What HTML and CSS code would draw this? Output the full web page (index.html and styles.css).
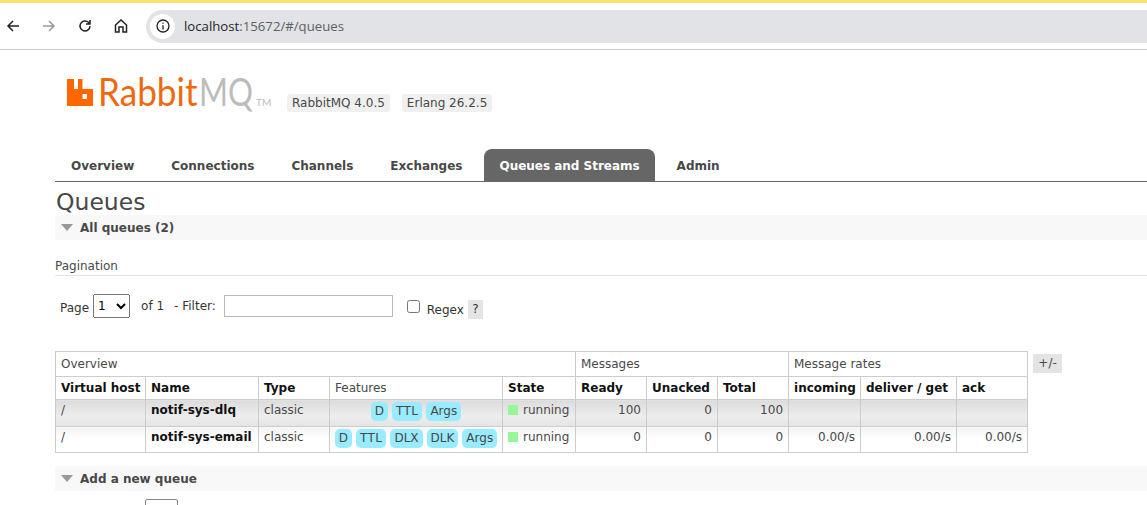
FILE: index.html
```html
<!DOCTYPE html>
<html lang="en">
  <head>
    <meta charset="UTF-8" />
    <title>RabbitMQ Management</title>
    <link rel="stylesheet" href="styles.css">
  </head>
  <body>
    <!-- browser chrome -->
    <div class="toolbar">
      <svg class="tool-icon" viewBox="0 0 16 16"><path d="M14 8H3M8 3L3 8l5 5" /></svg>
      <svg class="tool-icon tool-off" viewBox="0 0 16 16"><path d="M2 8h11M8 3l5 5-5 5" /></svg>
      <svg class="tool-icon" viewBox="0 0 16 16"><path d="M13 8a5 5 0 1 1-1.600-3.700L13 5.800M13 2v4H9" /></svg>
      <svg class="tool-icon" viewBox="0 0 16 16"><path d="M2.500 7L8 2l5.500 5v7H10V9H6v5H2.500z" /></svg>
      <div class="address">
        <span class="site-info">
          <svg viewBox="0 0 16 16"><circle cx="8" cy="8" r="6" /><path d="M8 7.300V11.500M8 4.500v1.300" /></svg>
        </span>
        <span class="url"><b>localhost</b>:15672/#/queues</span>
      </div>
    </div>

    <div class="page">
      <div class="header">
        <div class="logo">
          <svg class="logo-mark" viewBox="0 0 26 27"><path fill-rule="evenodd" d="M0 0h7v10h4V0h4.500v10H26v17H0zM15.500 15v5H20v-5z" /></svg>
          <span class="logo-rabbit">Rabbit</span><span class="logo-mq">MQ</span><span class="logo-tm">TM</span>
        </div>
        <span class="version">RabbitMQ 4.0.5</span>
        <span class="version">Erlang 26.2.5</span>
      </div>

      <ul class="tabs">
        <li>Overview</li>
        <li>Connections</li>
        <li>Channels</li>
        <li>Exchanges</li>
        <li class="active">Queues and Streams</li>
        <li>Admin</li>
      </ul>

      <h1>Queues</h1>
      <div class="section-bar"><span class="arrow"></span>All queues (2)</div>

      <h3 class="sub">Pagination</h3>
      <div class="filter-row">
        <span class="page-label">Page</span>
        <select class="page-select"><option>1</option></select>
        <span class="of">of 1</span>
        <span class="dash">- Filter:</span>
        <input class="filter" type="text" />
        <input class="regex" type="checkbox" />
        <span class="regex-label">Regex</span>
        <span class="help">?</span>
      </div>

      <div class="table-wrap">
        <table class="list">
          <colgroup>
            <col class="c-vhost" /><col class="c-name" /><col class="c-type" /><col class="c-feat" /><col class="c-state" />
            <col class="c-num" /><col class="c-num" /><col class="c-num" />
            <col class="c-inc" /><col class="c-del" /><col class="c-ack" />
          </colgroup>
          <tr class="group">
            <th colspan="5">Overview</th>
            <th colspan="3">Messages</th>
            <th colspan="3">Message rates</th>
          </tr>
          <tr class="head">
            <th>Virtual host</th><th>Name</th><th>Type</th><th class="plain">Features</th><th>State</th>
            <th>Ready</th><th>Unacked</th><th>Total</th>
            <th>incoming</th><th>deliver / get</th><th>ack</th>
          </tr>
          <tr class="alt1">
            <td>/</td><td class="qname">notif-sys-dlq</td><td>classic</td>
            <td class="tags"><span class="tag">D</span><span class="tag tag-ttl">TTL</span><span class="tag">Args</span></td>
            <td><span class="dot"></span>running</td>
            <td class="r">100</td><td class="r">0</td><td class="r">100</td>
            <td></td><td></td><td></td>
          </tr>
          <tr class="alt2">
            <td>/</td><td class="qname">notif-sys-email</td><td>classic</td>
            <td class="tags"><span class="tag">D</span><span class="tag tag-ttl">TTL</span><span class="tag">DLX</span><span class="tag">DLK</span><span class="tag">Args</span></td>
            <td><span class="dot"></span>running</td>
            <td class="r">0</td><td class="r">0</td><td class="r">0</td>
            <td class="r">0.00/s</td><td class="r">0.00/s</td><td class="r">0.00/s</td>
          </tr>
        </table>
        <span class="plus-minus">+/-</span>
      </div>

      <div class="section-bar section-add"><span class="arrow"></span>Add a new queue</div>
      <div class="add-form"><div class="stub"></div></div>
    </div>
  </body>
</html>
```
FILE: styles.css
```css
html, body {
  margin: 0;
  height: 505px;
  overflow: hidden;
  background: #fff;
}

body {
  font-family: "DejaVu Sans", Verdana, sans-serif;
  font-size: 12px;
  color: #484848;
}

/* browser toolbar */
.toolbar {
  display: flex;
  align-items: center;
  height: 46px;
  border-top: 3px solid #fde26c;
  border-bottom: 1px solid #ccc;
  padding-left: 5px;
}

.tool-icon {
  flex: none;
  width: 16px;
  height: 16px;
  margin-right: 20px;
  fill: none;
  stroke: #222;
  stroke-width: 1.5;
}

.tool-off {
  stroke: #999;
}

.address {
  display: flex;
  align-items: center;
  flex: 1;
  height: 33px;
  margin-left: -3px;
  border-radius: 17px 0 0 17px;
  background: #e1e3e6;
}

.site-info {
  display: flex;
  align-items: center;
  justify-content: center;
  width: 25px;
  height: 25px;
  margin-left: 4px;
  border-radius: 50%;
  background: #fff;
}

.site-info svg {
  width: 16px;
  height: 16px;
  fill: none;
  stroke: #222;
  stroke-width: 1.3;
}

.url {
  margin-left: 9px;
  font-family: "Open Sans", sans-serif;
  font-size: 13.200px;
  color: #5c5f63;
}

.url b {
  font-weight: 400;
  color: #1f1f1f;
}

/* page */
.page {
  padding-left: 55px;
}

.header {
  display: flex;
  align-items: flex-start;
  height: 99px;
}

.logo {
  display: flex;
  align-items: baseline;
  flex: none;
  width: 232px;
  height: 40px;
  margin-top: 21px;
  padding-left: 12px;
  box-sizing: border-box;
  font-family: "Lato", sans-serif;
  font-size: 39px;
  line-height: 40px;
}

.logo-mark {
  flex: none;
  align-self: flex-start;
  width: 26px;
  height: 27px;
  margin: 8px 5px 0 0;
  fill: #ff6600;
}

/* the real wordmark is narrower than any installed face */
.logo-rabbit, .logo-mq {
  transform-origin: left;
}

.logo-rabbit {
  width: 98px;
  color: #f0690f;
  transform: scaleX(0.9);
}

.logo-mq {
  width: 52px;
  margin-left: 3px;
  color: #bcbcbc;
  transform: scaleX(0.8);
}

.logo-tm {
  margin-left: 5px;
  font-size: 10px;
  color: #bcbcbc;
}

.version {
  margin: 44px 12px 0 0;
  padding: 1px 5px;
  border-radius: 3px;
  background: #f0f0f0;
  line-height: 16px;
  font-size: 12px;
}

.tabs {
  display: flex;
  margin: 0;
  padding: 0;
  height: 32px;
  border-bottom: 1px solid #666;
  list-style: none;
}

.tabs li {
  padding: 0 16px;
  margin-right: 5px;
  line-height: 35px;
  font-weight: bold;
  font-size: 12px;
  border-radius: 8px 8px 0 0;
}

.tabs li.active {
  margin: 0 5.500px 0 0.500px;
  padding: 0 15.500px;
  letter-spacing: -0.020px;
  background: #666;
  color: #fff;
}

h1 {
  margin: 8px 0 0 1px;
  font-size: 23.500px;
  line-height: 25px;
  font-weight: normal;
  color: #484848;
}

.section-bar {
  display: flex;
  align-items: center;
  height: 25px;
  background: #f8f8f8;
  font-size: 12px;
  font-weight: bold;
}

.arrow {
  width: 0;
  height: 0;
  margin: 0 7px 0 6px;
  border-left: 6px solid transparent;
  border-right: 6px solid transparent;
  border-top: 7px solid #999;
}

.sub {
  margin: 19px 0 0;
  padding-bottom: 1px;
  border-bottom: 1px solid #e4e4e4;
  font-size: 12px;
  line-height: 15px;
  font-weight: normal;
}

.filter-row {
  display: flex;
  align-items: center;
  height: 24px;
  margin-top: 18px;
  padding-left: 5px;
  color: #333;
}

.page-label {
  margin-top: 4px;
}

.page-select {
  width: 37px;
  height: 24px;
  margin: 0 0 0 4px;
  font-family: inherit;
  font-size: 12px;
}

.of {
  margin: 0 0 1px 11px;
}

.dash {
  margin: 0 0 1px 10px;
}

.filter {
  width: 169px;
  height: 22px;
  margin: 0 0 0 8px;
  padding: 0;
  box-sizing: border-box;
  border: 1px solid #bbb;
}

.regex {
  width: 13px;
  height: 13px;
  margin: 0 0 0 14px;
}

.regex-label {
  margin: 8px 0 0 7px;
}

.help {
  width: 15px;
  margin: 7px 0 0 4px;
  padding: 2px 0;
  background: #e4e4e4;
  line-height: 15px;
  text-align: center;
}

.table-wrap {
  display: flex;
  align-items: flex-start;
  margin-top: 33px;
}

.list {
  width: 973px;
  table-layout: fixed;
  border-collapse: collapse;
  font-size: 12px;
}

.c-vhost { width: 90px; }
.c-name { width: 113px; }
.c-type { width: 71px; }
.c-feat { width: 173px; }
.c-state { width: 73px; }
.c-num { width: 71px; }
.c-inc { width: 72px; }
.c-del { width: 96px; }
.c-ack { width: 71px; }

.list th, .list td {
  padding: 0 5px;
  border: 1px solid #ccc;
  text-align: left;
  vertical-align: top;
  white-space: nowrap;
}

.group th {
  height: 24px;
  line-height: 24px;
  font-weight: normal;
}

.head th {
  height: 22px;
  line-height: 22px;
  font-size: 12px;
  color: #111;
}

.head th.plain {
  font-weight: normal;
  color: #484848;
}

.alt1 td, .alt2 td {
  line-height: 20px;
}

.alt1 td {
  height: 26px;
  background: linear-gradient(#dcdcdc, #ededed 60%, #e4e4e4);
}

.alt2 td {
  height: 25px;
  background: linear-gradient(#f4f4f4, #fff 50%);
}

.list td.r {
  text-align: right;
}

.list td.qname {
  font-weight: bold;
  font-size: 12px;
  color: #111;
}

.list td.tags {
  padding: 2px 0 0;
  height: 23px;
  text-align: center;
  line-height: 19px;
}

.tag {
  display: inline-block;
  margin: 0 2px;
  padding: 0 4px;
  border-radius: 5px;
  background: #99ebff;
  vertical-align: top;
}

.tag-ttl {
  letter-spacing: 0.400px;
}

.dot {
  display: inline-block;
  width: 10px;
  height: 10px;
  margin-right: 5px;
  background: #98f898;
  vertical-align: -1px;
}

.plus-minus {
  width: 29px;
  margin: 3px 0 0 5px;
  background: #e4e4e4;
  line-height: 19px;
  text-align: center;
}

.section-add {
  margin-top: 13px;
}

.add-form {
  padding: 8px 0 0 90px;
}

.stub {
  width: 33px;
  height: 20px;
  border: 1px solid #888;
  border-radius: 2px;
  box-sizing: border-box;
}
```
